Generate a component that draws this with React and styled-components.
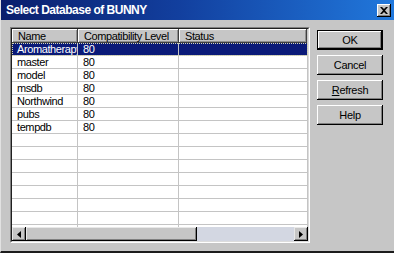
import React from "react";
import styled, { createGlobalStyle } from "styled-components";

const FACE = "#c6c6c6";
const UI_FONT = `"Liberation Sans", Arial, sans-serif`;

const databases = [
  { name: "Aromatherapy", level: "80", status: "" },
  { name: "master", level: "80", status: "" },
  { name: "model", level: "80", status: "" },
  { name: "msdb", level: "80", status: "" },
  { name: "Northwind", level: "80", status: "" },
  { name: "pubs", level: "80", status: "" },
  { name: "tempdb", level: "80", status: "" },
];

const EMPTY_ROWS = 8;

const App = () => {
  const rows = [
    ...databases,
    ...Array.from({ length: EMPTY_ROWS }, () => ({ name: "", level: "", status: "" })),
  ];

  return (
    <>
      <GlobalStyle />
      <Window>
        <TitleBar>
          <Title>Select Database of BUNNY</Title>
          <CloseButton aria-label="Close">
            <svg width="8" height="7" viewBox="0 0 8 7">
              <path d="M0 0h2l2 2 2-2h2L5 3.5 8 7H6L4 5 2 7H0l3-3.5z" fill="#000" />
            </svg>
          </CloseButton>
        </TitleBar>

        <Body>
          <ListFrame>
            <ListInner>
              <HeaderRow>
                <HeaderCell>Name</HeaderCell>
                <HeaderCell>Compatibility Level</HeaderCell>
                <HeaderCell>Status</HeaderCell>
              </HeaderRow>

              <Rows>
                {rows.map((row, i) => (
                  <Row key={i} $selected={i === 0}>
                    <Cell>{row.name}</Cell>
                    <Cell>{row.level}</Cell>
                    <Cell>{row.status}</Cell>
                  </Row>
                ))}
              </Rows>

              <ScrollBar>
                <ScrollArrow>
                  <svg width="4" height="7" viewBox="0 0 4 7">
                    <path d="M4 0v7L0 3.5z" fill="#000" />
                  </svg>
                </ScrollArrow>
                <Thumb />
                <Track />
                <ScrollArrow>
                  <svg width="4" height="7" viewBox="0 0 4 7">
                    <path d="M0 0v7l4-3.5z" fill="#000" />
                  </svg>
                </ScrollArrow>
              </ScrollBar>
            </ListInner>
          </ListFrame>

          <ButtonColumn>
            <DialogButton $default>OK</DialogButton>
            <DialogButton>Cancel</DialogButton>
            <DialogButton>
              <u>R</u>efresh
            </DialogButton>
            <DialogButton>Help</DialogButton>
          </ButtonColumn>
        </Body>
      </Window>
    </>
  );
};

export default App;

const GlobalStyle = createGlobalStyle`
  html, body {
    margin: 0;
    padding: 0;
    background: ${FACE};
  }
  * {
    box-sizing: border-box;
  }
`;

const Window = styled.div`
  width: 394px;
  height: 253px;
  display: flex;
  flex-direction: column;
  background: ${FACE};
  border-left: 1px solid #e2e2e2;
  border-bottom: 2px solid #1c1c1c;
  font-family: ${UI_FONT};
  overflow: hidden;
`;

const TitleBar = styled.div`
  height: 20px;
  flex-shrink: 0;
  display: flex;
  align-items: center;
  justify-content: space-between;
  padding: 0 3px 0 5px;
  background: linear-gradient(to right, #0a1e6c 0%, #123f9e 45%, #2178dc 100%);
`;

const Title = styled.span`
  color: #fff;
  font-weight: 700;
  font-size: 12px;
  letter-spacing: -0.5px;
`;

const CloseButton = styled.button`
  width: 14px;
  height: 13px;
  padding: 0;
  border: none;
  display: flex;
  align-items: center;
  justify-content: center;
  background: ${FACE};
  box-shadow: inset -1px -1px #000, inset 1px 1px #fff, inset -2px -2px #808080;
`;

const Body = styled.div`
  flex: 1;
  display: flex;
  gap: 7px;
  padding: 7px 0 0 9px;
`;

const ListFrame = styled.div`
  width: 300px;
  height: 216px;
  border: 1px solid;
  border-color: #808080 #fff #fff #808080;
`;

const ListInner = styled.div`
  height: 100%;
  display: flex;
  flex-direction: column;
  background: #fff;
  border: 1px solid;
  border-color: #202020 #dcdcdc #dcdcdc #202020;
`;

const COLUMNS = "66px 101px 1fr";

const HeaderRow = styled.div`
  display: grid;
  grid-template-columns: ${COLUMNS};
  height: 14px;
  flex-shrink: 0;
  padding-right: 1px;
  background: ${FACE};
`;

const HeaderCell = styled.div`
  padding: 1px 0 0 6px;
  font-size: 11px;
  line-height: 13px;
  letter-spacing: -0.4px;
  color: #000;
  white-space: nowrap;
  overflow: hidden;
  box-shadow: inset -1px -1px #404040, inset 1px 1px #fff, inset -2px -2px #909090;
`;

const Rows = styled.div`
  flex: 1;
  overflow: hidden;
`;

const Row = styled.div`
  display: grid;
  grid-template-columns: ${COLUMNS};
  height: 13px;
  border-bottom: 1px solid #c4c4c4;
  background: ${(p) => (p.$selected ? "#0a1a78" : "#fff")};
  color: ${(p) => (p.$selected ? "#fff" : "#000")};
  outline: ${(p) => (p.$selected ? "1px dotted #d8d8b0" : "none")};
  outline-offset: -1px;
`;

const Cell = styled.div`
  padding-left: 5px;
  font-size: 11px;
  line-height: 12px;
  letter-spacing: -0.4px;
  white-space: nowrap;
  overflow: hidden;
  border-right: 1px solid #c4c4c4;
`;

const ScrollBar = styled.div`
  height: 14px;
  flex-shrink: 0;
  display: flex;
  background: #d3d7e2;
`;

const ScrollArrow = styled.div`
  width: 14px;
  height: 14px;
  display: flex;
  align-items: center;
  justify-content: center;
  background: ${FACE};
  box-shadow: inset -1px -1px #000, inset 1px 1px #e8e8e8, inset -2px -2px #808080;
`;

const Thumb = styled.div`
  width: 171px;
  height: 14px;
  background: ${FACE};
  box-shadow: inset -1px -1px #000, inset 1px 1px #e8e8e8, inset -2px -2px #808080;
`;

const Track = styled.div`
  flex: 1;
`;

const ButtonColumn = styled.div`
  display: flex;
  flex-direction: column;
  gap: 5px;
  padding-top: 3px;
`;

const DialogButton = styled.button`
  width: 66px;
  height: 20px;
  padding: 0;
  border: ${(p) => (p.$default ? "1px solid #000" : "none")};
  background: ${FACE};
  font-family: ${UI_FONT};
  font-size: 11px;
  letter-spacing: -0.3px;
  color: #000;
  box-shadow: inset -1px -1px #000, inset 1px 1px #fff, inset -2px -2px #808080;

  u {
    text-decoration: underline;
  }
`;
